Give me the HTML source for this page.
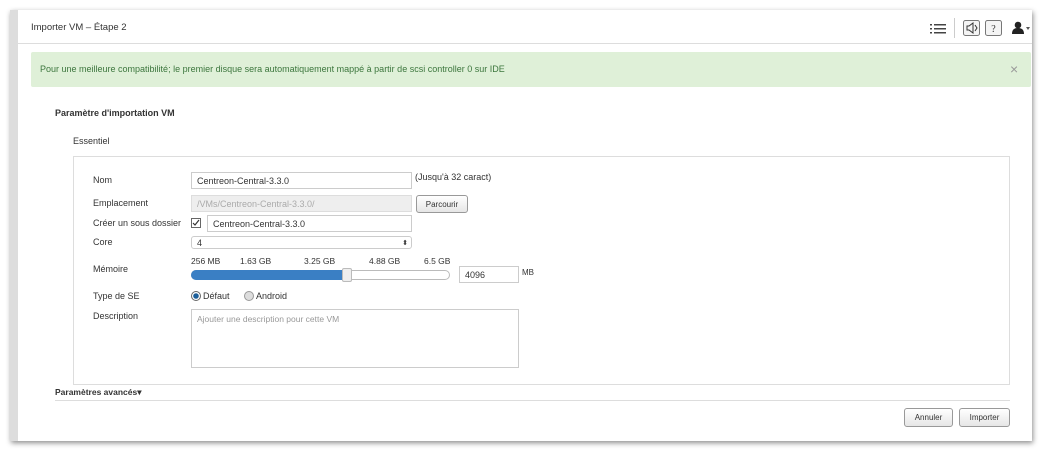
<!DOCTYPE html><html><head><meta charset="utf-8"><style>
*{box-sizing:border-box;margin:0;padding:0}
body{width:1041px;height:451px;background:#fff;font-family:"Liberation Sans",sans-serif;font-size:9px;color:#333;position:relative;overflow:hidden}
.a{position:absolute}
.win{left:10px;top:10px;width:1022px;height:431px;background:#fff;box-shadow:1px 2px 5px rgba(0,0,0,.45)}
.lbar{left:10px;top:10px;width:8px;height:431px;background:#ddd}
input,.inp{position:absolute;border:1px solid #ccc;background:#fff;font-size:9px;padding-left:5px;color:#333;display:flex;align-items:center}
.btn{position:absolute;border:1px solid #999;border-radius:3px;background:linear-gradient(#fff,#e6e6e6);font-size:8px;display:flex;align-items:center;justify-content:center;color:#333}
.lbl{position:absolute;left:93px;font-size:9px}
</style></head><body>
<div class="a win"></div><div class="a lbar"></div>
<div class="a" style="left:31px;top:22px;font-size:9.5px;color:#333">Importer VM – Étape 2</div>
<div class="a" style="left:18px;top:43px;width:1014px;height:1px;background:#ddd"></div>
<svg class="a" style="left:930px;top:23px" width="16" height="12"><g fill="#444"><rect x="0" y="1" width="2" height="1.5"/><rect x="4" y="1" width="12" height="1.5"/><rect x="0" y="5" width="2" height="1.5"/><rect x="4" y="5" width="12" height="1.5"/><rect x="0" y="9" width="2" height="1.5"/><rect x="4" y="9" width="12" height="1.5"/></g></svg>
<div class="a" style="left:954px;top:18px;width:1px;height:20px;background:#ccc"></div>
<svg class="a" style="left:963px;top:20px" width="17" height="16"><rect x=".5" y=".5" width="16" height="15" rx="2" fill="#f4f4f4" stroke="#777"/><path d="M4 6h2l4-3v10l-4-3H4z" fill="none" stroke="#333"/><path d="M12 5l2 3-2 3" fill="none" stroke="#333"/></svg>
<svg class="a" style="left:985px;top:20px" width="17" height="16"><rect x=".5" y=".5" width="16" height="15" rx="2" fill="#f4f4f4" stroke="#777"/><text x="8.5" y="12" font-size="10" text-anchor="middle" font-family="Liberation Serif" fill="#333">?</text></svg>
<svg class="a" style="left:1012px;top:21px" width="20" height="14"><circle cx="6" cy="4" r="3.3" fill="#222"/><path d="M0 13c0-5 3-6 6-6s6 1 6 6z" fill="#222"/><path d="M14 6h4l-2 3z" fill="#555"/></svg>
<div class="a" style="left:31px;top:52px;width:1000px;height:35px;background:#dff0d8;border-radius:2px"></div>
<div class="a" style="left:40px;top:64px;color:#3c763d;font-size:9px">Pour une meilleure compatibilité; le premier disque sera automatiquement mappé à partir de scsi controller 0 sur IDE</div>
<div class="a" style="left:1010px;top:61px;color:#999;font-size:14px">×</div>
<div class="a" style="left:55px;top:108px;font-weight:bold;font-size:9px">Paramètre d'importation VM</div>
<div class="a" style="left:73px;top:136px">Essentiel</div>
<div class="a" style="left:73px;top:156px;width:937px;height:229px;border:1px solid #ddd"></div>
<div class="lbl" style="top:175px">Nom</div>
<div class="inp" style="left:191px;top:172px;width:221px;height:17px">Centreon-Central-3.3.0</div>
<div class="a" style="left:415px;top:172px">(Jusqu'à 32 caract)</div>
<div class="lbl" style="top:198px">Emplacement</div>
<div class="inp" style="left:191px;top:195px;width:221px;height:17px;background:#eee;color:#aaa;border-color:#ddd">/VMs/Centreon-Central-3.3.0/</div>
<div class="btn" style="left:416px;top:195px;width:52px;height:18px">Parcourir</div>
<div class="lbl" style="top:218px">Créer un sous dossier</div>
<svg class="a" style="left:191px;top:218px" width="10" height="10"><rect x=".5" y=".5" width="9" height="9" fill="#fff" stroke="#666"/><path d="M2 5l2 2 4-5" fill="none" stroke="#333" stroke-width="1.2"/></svg>
<div class="inp" style="left:207px;top:215px;width:205px;height:17px">Centreon-Central-3.3.0</div>
<div class="lbl" style="top:237px">Core</div>
<div class="inp" style="left:191px;top:236px;width:221px;height:13px;border-radius:3px">4<span style="position:absolute;right:3px;font-size:7px">⬍</span></div>
<div class="a" style="left:191px;top:256px;font-size:8.5px">256 MB</div>
<div class="a" style="left:240px;top:256px;font-size:8.5px">1.63 GB</div>
<div class="a" style="left:304px;top:256px;font-size:8.5px">3.25 GB</div>
<div class="a" style="left:369px;top:256px;font-size:8.5px">4.88 GB</div>
<div class="a" style="left:424px;top:256px;font-size:8.5px">6.5 GB</div>
<div class="lbl" style="top:264px">Mémoire</div>
<div class="a" style="left:191px;top:270px;width:259px;height:10px;border:1px solid #bbb;border-radius:5px;background:#fff"></div>
<div class="a" style="left:191px;top:270px;width:155px;height:10px;border-radius:5px 0 0 5px;background:#3a7fc4"></div>
<div class="a" style="left:342px;top:268px;width:10px;height:14px;border:1px solid #bbb;border-radius:2px;background:#eee"></div>
<div class="inp" style="left:459px;top:266px;width:60px;height:17px">4096</div>
<div class="a" style="left:522px;top:268px;font-size:8px">MB</div>
<div class="lbl" style="top:291px">Type de SE</div>
<svg class="a" style="left:191px;top:291px" width="10" height="10"><circle cx="5" cy="5" r="4.5" fill="#fff" stroke="#666"/><circle cx="5" cy="5" r="2.8" fill="#1d5f9a"/></svg>
<div class="a" style="left:203px;top:291px">Défaut</div>
<svg class="a" style="left:244px;top:291px" width="10" height="10"><circle cx="5" cy="5" r="4.5" fill="#ddd" stroke="#999"/></svg>
<div class="a" style="left:256px;top:291px">Android</div>
<div class="lbl" style="top:311px">Description</div>
<div class="a" style="left:191px;top:309px;width:328px;height:59px;border:1px solid #ccc;padding:4px 5px;color:#999;font-size:8.5px">Ajouter une description pour cette VM</div>
<div class="a" style="left:55px;top:387px;font-weight:bold;font-size:8.5px">Paramètres avancés▾</div>
<div class="a" style="left:55px;top:400px;width:955px;height:1px;background:#ddd"></div>
<div class="btn" style="left:904px;top:408px;width:49px;height:19px">Annuler</div>
<div class="btn" style="left:959px;top:408px;width:51px;height:19px">Importer</div>
</body></html>
